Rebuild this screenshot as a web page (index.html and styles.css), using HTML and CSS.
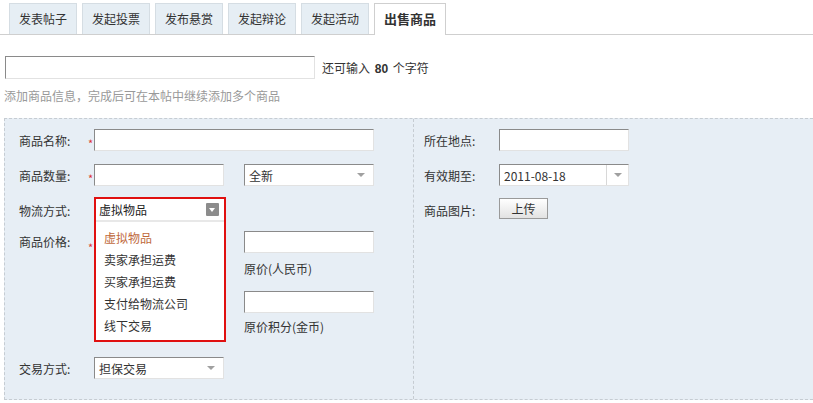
FILE: index.html
```html
<!DOCTYPE html>
<html lang="zh">
<head>
<meta charset="utf-8">
<link rel="stylesheet" href="styles.css">
</head>
<body>
<div class="tabs">
  <div class="tab">发表帖子</div>
  <div class="tab">发起投票</div>
  <div class="tab">发布悬赏</div>
  <div class="tab">发起辩论</div>
  <div class="tab">发起活动</div>
  <div class="tab active">出售商品</div>
</div>

<div class="title-row">
  <div class="input title-input"></div>
  <span class="remain">还可输入 <b>80</b> 个字符</span>
</div>
<div class="hint">添加商品信息，完成后可在本帖中继续添加多个商品</div>

<div class="box">
  <div class="col left">
    <div class="row">
      <span class="label">商品名称:</span><span class="req">*</span>
      <div class="input w280"></div>
    </div>
    <div class="row">
      <span class="label">商品数量:</span><span class="req">*</span>
      <div class="input w130"></div>
      <div class="select w130 gap20"><span>全新</span><i class="tri"></i></div>
    </div>
    <div class="row short">
      <span class="label">物流方式:</span><span class="req"></span>
      <div class="dd-anchor">
        <div class="dropdown">
          <div class="dd-head"><span>虚拟物品</span><i class="dd-btn"></i></div>
          <ul class="dd-list">
            <li class="sel">虚拟物品</li>
            <li>卖家承担运费</li>
            <li>买家承担运费</li>
            <li>支付给物流公司</li>
            <li>线下交易</li>
          </ul>
        </div>
      </div>
    </div>
    <div class="row top">
      <span class="label">商品价格:</span><span class="req">*</span>
      <div class="input w130"></div>
      <div class="price gap20">
        <div class="input w130"></div>
        <div class="sub">原价(人民币)</div>
        <div class="input w130"></div>
        <div class="sub last">原价积分(金币)</div>
      </div>
    </div>
    <div class="row">
      <span class="label">交易方式:</span><span class="req"></span>
      <div class="select w130"><span>担保交易</span><i class="tri"></i></div>
    </div>
  </div>
  <div class="col right">
    <div class="row">
      <span class="label">所在地点:</span>
      <div class="input w130"></div>
    </div>
    <div class="row">
      <span class="label">有效期至:</span>
      <div class="select date w130"><span>2011-08-18</span><i class="sep"><i class="tri"></i></i></div>
    </div>
    <div class="row">
      <span class="label">商品图片:</span>
      <div class="btn">上传</div>
    </div>
  </div>
</div>
</body>
</html>
```

FILE: styles.css
```css
* { box-sizing: border-box; }
body {
  margin: 0;
  font-family: "Noto Sans CJK SC", "Liberation Sans", sans-serif;
  font-size: 12px;
  color: #333;
  background: #fff;
  overflow: hidden;
}
.tabs {
  display: flex;
  gap: 5px;
  padding: 3px 0 0 9px;
  height: 35px;
  border-bottom: 1px solid #cfcfcf;
}
.tab {
  height: 31px;
  line-height: 29px;
  padding: 0 9px;
  background: #e6eef4;
  border: 1px solid #d5dde3;
  border-bottom: none;
  color: #333;
}
.tab.active {
  background: #fff;
  border-color: #cfcfcf;
  font-weight: bold;
  height: 32px;
  font-size: 13px;
  padding: 0 9px;
}
.title-row {
  display: flex;
  align-items: center;
  margin-top: 21px;
  padding-left: 5px;
}
.input {
  height: 22px;
  background: #fff;
  border: 1px solid;
  border-color: #8a8a8a #e2e2e2 #e2e2e2 #8a8a8a;
}
.title-input { width: 310px; height: 23px; }
.remain { margin-left: 7px; color: #333; }
.remain b { font-family: "Liberation Sans", sans-serif; font-size: 12px; margin: 0 2px; }
.hint {
  margin: 8px 0 0 4px;
  color: #999;
  height: 18px;
  line-height: 18px;
}
.box {
  margin: 13px 0 0 4px;
  height: 282px;
  background: #e7eef5;
  border-top: 1px dashed #c6ccd2;
  border-left: 1px dashed #c6ccd2;
  border-bottom: 1px dashed #c6ccd2;
  display: flex;
}
.col { padding-top: 10px; }
.left { width: 408px; padding-left: 14px; }
.right { border-left: 1px dashed #c6ccd2; padding-left: 10px; }
.row {
  display: flex;
  align-items: center;
  margin-bottom: 13px;
  min-height: 22px;
}
.row.short { margin-bottom: 10px; }
.row.top { align-items: flex-start; margin-bottom: 12px; }
.row.top .label, .row.top .req { line-height: 22px; }
.label { width: 69px; }
.right .label { width: 75px; }
.req { width: 6px; color: #d33; font-size: 11px; padding-top: 5px; }
.row.top .req { padding-top: 5px; }
.w280 { width: 280px; }
.w130 { width: 130px; }
.gap20 { margin-left: 20px; }
.select {
  height: 22px;
  background: #fff;
  border: 1px solid;
  border-color: #8a8a8a #e2e2e2 #e2e2e2 #8a8a8a;
  display: flex;
  align-items: center;
  padding-left: 4px;
}
.select span { flex: 1; }
.tri {
  display: block;
  width: 0; height: 0;
  border-left: 4px solid transparent;
  border-right: 4px solid transparent;
  border-top: 4px solid #a0a0a0;
  margin-right: 8px;
}
.date .sep {
  width: 22px;
  height: 20px;
  border-left: 1px solid #d8d8d8;
  display: flex;
  align-items: center;
  justify-content: center;
}
.date .sep .tri { margin-right: 0; }
.dd-anchor { position: relative; width: 130px; height: 22px; }
.dropdown {
  position: absolute;
  left: 0;
  top: -2px;
  width: 132px;
  height: 145px;
  border: 2px solid #e01010;
  background: #fff;
  z-index: 2;
}
.dd-head {
  height: 23px;
  display: flex;
  align-items: center;
  padding-left: 3px;
  border-bottom: 2px solid #e8e8e8;
}
.dd-head span { flex: 1; color: #222; }
.dd-btn {
  width: 13px;
  height: 13px;
  background: #8c8c8c;
  margin-right: 5px;
  border-radius: 1px;
  position: relative;
}
.dd-btn::after {
  content: "";
  position: absolute;
  left: 3px;
  top: 5px;
  border-left: 3.5px solid transparent;
  border-right: 3.5px solid transparent;
  border-top: 4px solid #fff;
}
.dd-list {
  list-style: none;
  margin: 0;
  padding: 5px 0 0 8px;
}
.dd-list li {
  height: 22px;
  line-height: 22px;
  color: #333;
}
.dd-list li.sel { color: #c0693c; }
.price { display: flex; flex-direction: column; }
.sub { height: 38px; line-height: 32px; }
.sub.last { height: 32px; line-height: 28px; }
.btn {
  width: 49px;
  height: 21px;
  line-height: 19px;
  text-align: center;
  border: 1px solid #9a9a9a;
  background: linear-gradient(#ffffff, #e2e2e2);
  color: #333;
  margin-top: -3px;
}
```
